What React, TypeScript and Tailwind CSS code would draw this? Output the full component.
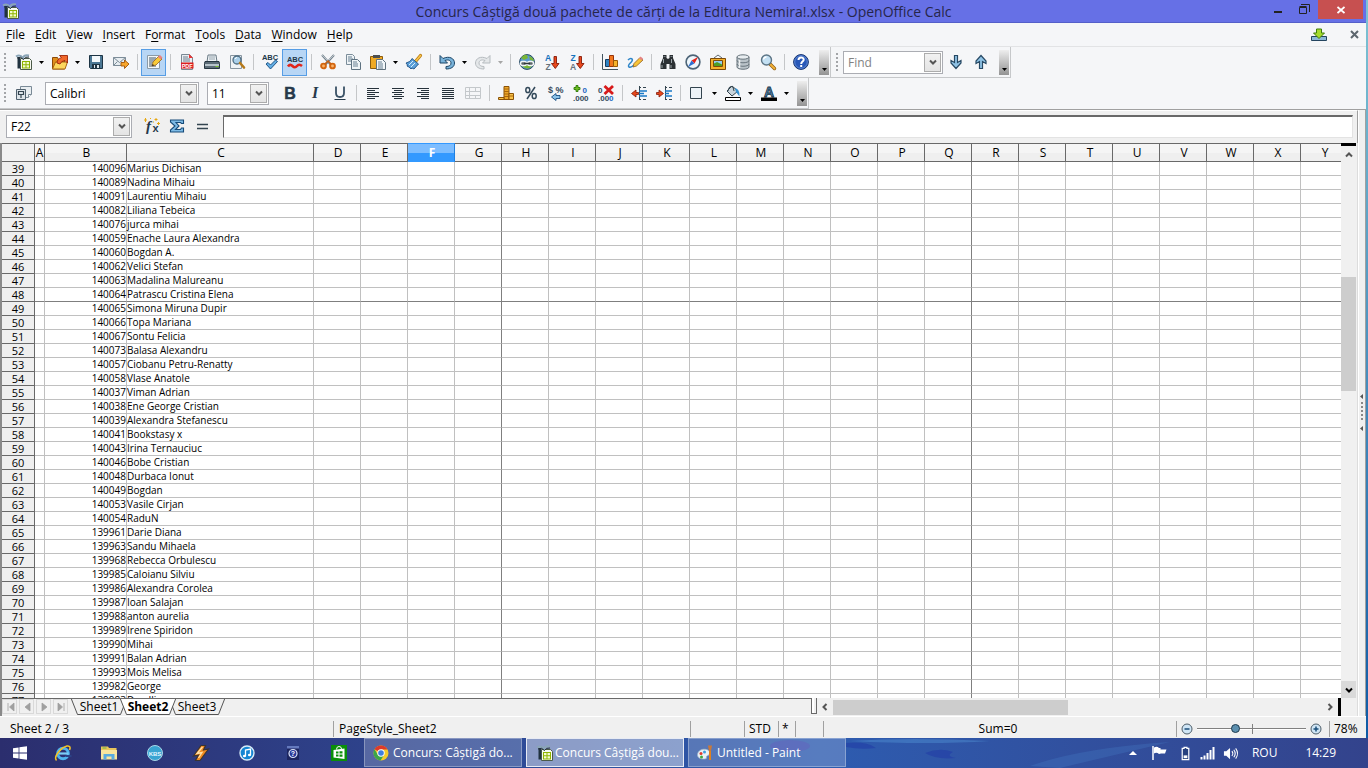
import React from 'react';

type IconProps = { name: string; size?: number };

const sheetIcon = (
  <>
    <path d="M1.500 3h2.500v11.500H1.500z" fill="#20323f" />
    <path d="M4.500 4.500h9l2 2v9h-11z" fill="#f7f9f2" stroke="#4b5a48" />
    <path d="M6 7h8v7.500H6z" fill="#8fb400" />
    <path d="M7 8h2.500v2.200H7zM10.500 8H13v2.200h-2.500zM7 11.200h2.500v2.300H7zM10.500 11.200H13v2.300h-2.500z" fill="#f4fbd0" />
    <path d="M0 2.500q4-2.500 7 1.500 1-3.500 6-2.500" fill="none" stroke="#8aa5b7" strokeWidth="2" />
    <path d="M1 4q4-2 6.500 1.500Q9 2.500 13 3" fill="none" stroke="#25313b" strokeWidth="1" />
  </>
);

const art: Record<string, React.ReactNode> = {
  sheet: sheetIcon,
  open: (
    <>
      <path d="M.5 3.500h5l1 2h6v9.500H.5z" fill="#e08e1c" stroke="#8c4a08" />
      <path d="M.5 15l3-7h12l-2.500 7z" fill="#fcd65c" stroke="#a8640f" />
      <path d="M5 9q0-4 4.500-5.500L7.500 1.500h8v7.500l-2.500-2.500Q9 7 8 10z" fill="#f0682a" stroke="#9a2508" strokeWidth=".9" />
    </>
  ),
  save: (
    <>
      <path d="M1.500 1.500h13v13h-12l-1-1z" fill="#4b7794" stroke="#1d3444" />
      <path d="M4 2h8v6H4z" fill="#f3f8fb" />
      <path d="M4 10h8v4.500H4z" fill="#1f3443" />
      <path d="M6 11h5v3H6z" fill="#dfe9ef" />
      <path d="M7 11h2v3H7z" fill="#1f3443" />
    </>
  ),
  mail: (
    <>
      <path d="M.5 3.500h12v8H.5z" fill="#e7edf1" stroke="#7d8d99" />
      <path d="M.5 3.500l6 5 6-5M.5 11.500l4-4M12.500 11.500l-4-4" fill="none" stroke="#7d8d99" />
      <path d="M8 8.500h3.500v-2.500l4.500 4-4.500 4.500v-2.500H8z" fill="#f7a62c" stroke="#a35408" strokeWidth=".9" />
    </>
  ),
  edit: (
    <>
      <path d="M1.500 1.500h12v13h-12z" fill="#f4f7f9" stroke="#8b9aa6" />
      <path d="M3 4h7M3 6h6M3 8h4M3 10h3M3 12h7" stroke="#3f5464" />
      <path d="M6 12l1-4 6-6 3 3-6 6z" fill="#f8ca38" stroke="#97621a" strokeWidth=".8" />
      <path d="M12 3l2-2 2.500 2.500L14.500 5.500z" fill="#e88383" />
      <path d="M6 12l.7-2 1.500 1.300z" fill="#222" />
    </>
  ),
  pdf: (
    <>
      <path d="M2.500.5h8l3 3v12h-11z" fill="#e9eef2" stroke="#798893" />
      <path d="M4 3h5M4 5h7M4 7h7" stroke="#6d7f8d" />
      <path d="M10 0l4 4h-4z" fill="#e33" />
      <path d="M2 8.500h12.500V14.500H2z" fill="#dc1f1f" />
      <text x="8.200" y="13.500" fontSize="5.500" fontWeight="800" textAnchor="middle" fill="#fff" fontFamily="Liberation Sans">PDF</text>
    </>
  ),
  print: (
    <>
      <path d="M4 1h8l1 7H3z" fill="#edf2f5" stroke="#6b7b86" />
      <path d="M5 3h6M5 5h6" stroke="#98a6b0" />
      <path d="M1 7.500h14l.5 2v5H.5v-5z" fill="#5c6c77" stroke="#263641" />
      <path d="M1 10h14v2H1z" fill="#b7c4cb" />
      <path d="M11.500 12h3v1h-3z" fill="#79c626" />
    </>
  ),
  preview: (
    <>
      <path d="M1.500 1.500h11v13h-11z" fill="#eef2f5" stroke="#8795a0" />
      <circle cx="8" cy="6" r="4" fill="#a9cfe9" stroke="#4d6b80" strokeWidth="1.300" />
      <path d="M11 9l4 4.500" stroke="#b67a1b" strokeWidth="2.600" strokeLinecap="round" />
      <path d="M6 5a2.500 2.500 0 012-1.500" stroke="#fff" fill="none" />
    </>
  ),
  spell: (
    <>
      <text x="8" y="6" fontSize="7.500" fontWeight="700" textAnchor="middle" fill="#23384a" fontFamily="Liberation Sans">ABC</text>
      <path d="M4 10l2-1.500 2.500 2.500 5-5 2 1.500-7 7.500z" fill="#63aee4" stroke="#134a7d" strokeWidth=".9" />
    </>
  ),
  autospell: (
    <>
      <text x="8" y="8" fontSize="7.500" fontWeight="700" textAnchor="middle" fill="#23384a" fontFamily="Liberation Sans">ABC</text>
      <path d="M1 12.500q2-3 4.500-.5t4.500 0 5 0" fill="none" stroke="#e0251b" strokeWidth="2.600" />
    </>
  ),
  cut: (
    <>
      <path d="M2 1l9 10M14 1L5 11" stroke="#76848e" strokeWidth="2" />
      <path d="M2 1l6 6M14 1L9 6" stroke="#d8e0e5" strokeWidth=".7" />
      <circle cx="3.500" cy="12" r="2.400" fill="#f8b26a" stroke="#d3650e" strokeWidth="1.900" />
      <circle cx="12.500" cy="12" r="2.400" fill="#f8b26a" stroke="#d3650e" strokeWidth="1.900" />
      <path d="M5 10l3-3 3 3" fill="none" stroke="#c95f10" strokeWidth="1.500" />
    </>
  ),
  copy: (
    <>
      <path d="M1.500.5h6l2 2v8h-8z" fill="#eef3f6" stroke="#7b8d9a" />
      <path d="M3 3h4M3 5h5M3 7h5" stroke="#688092" />
      <path d="M6.500 5.500h6l3 3v7h-9z" fill="#eef3f6" stroke="#5e7281" />
      <path d="M8 8h4M8 10h5M8 12h5" stroke="#688092" />
    </>
  ),
  paste: (
    <>
      <path d="M.5 2.500h12v12H.5z" fill="#f0aa24" stroke="#8c5c0c" />
      <path d="M3 1h7v3H3z" fill="#4c4f50" />
      <path d="M6.500 5.500h6l3 3v7h-9z" fill="#f3f7f9" stroke="#60717d" />
      <path d="M8 8h4M8 10h5M8 12h5M8 14h5" stroke="#688092" />
    </>
  ),
  brush: (
    <>
      <path d="M14.500 1.500l-5 6" stroke="#bb7c14" strokeWidth="3.200" strokeLinecap="round" />
      <path d="M14.500 1.500l-5 6" stroke="#f8c64b" strokeWidth="1.600" strokeLinecap="round" />
      <path d="M6 4.500l6.500 5.500-4.500 5-2-1-1 1-2-2-2-1 .5-1-1.500-2c3-1 5-2 6-4.500z" fill="#5b9fd8" stroke="#1d5186" strokeWidth=".9" />
      <path d="M3 11l4-4M5 13l4-4" stroke="#d8edfb" />
    </>
  ),
  undo: (
    <path d="M1 1.500v7.500h7.500L6 6.500c4-1.500 6 .5 6 2.500 0 2.500-2 3.500-5 3.500v2.500c5 0 8.500-2 8.500-6 0-4.500-5-7.500-11.500-4.500z" fill="#79b3da" stroke="#1c4566" strokeWidth="1" />
  ),
  redo: (
    <path d="M15 1.500v7.500H7.500L10 6.500c-4-1.500-6 .5-6 2.500 0 2.500 2 3.500 5 3.500v2.500c-5 0-8.500-2-8.500-6 0-4.500 5-7.500 11.500-4.500z" fill="#e4e7e9" stroke="#b6bbbf" strokeWidth="1" />
  ),
  globe: (
    <>
      <circle cx="8" cy="8" r="7.400" fill="#5b9bd0" stroke="#25475f" />
      <path d="M2 4q3-4 6-3l1 3-4 2zM10 2q4 1 5 5l-4-1zM3 12q5-2 10 0-4 5-10 0z" fill="#79b636" />
      <rect x="1.500" y="7.500" width="6" height="4" rx="2" fill="#5a6468" stroke="#f2f5f7" strokeWidth="1.500" />
      <rect x="8.500" y="7.500" width="6" height="4" rx="2" fill="#5a6468" stroke="#f2f5f7" strokeWidth="1.500" />
      <path d="M5 9.500h6" stroke="#30373b" strokeWidth="1.500" />
    </>
  ),
  sortAz: (
    <>
      <text x="4" y="7" fontSize="8.500" fontWeight="700" textAnchor="middle" fill="#1372bd" fontFamily="Liberation Sans">A</text>
      <text x="4" y="15.500" fontSize="8.500" fontWeight="700" textAnchor="middle" fill="#65727c" fontFamily="Liberation Sans">Z</text>
      <path d="M10 2.500h2.500v7h2.500l-3.700 5-3.800-5H10z" fill="#e8481c" stroke="#851a08" strokeWidth=".9" />
    </>
  ),
  sortZa: (
    <>
      <text x="4" y="7" fontSize="8.500" fontWeight="700" textAnchor="middle" fill="#1372bd" fontFamily="Liberation Sans">Z</text>
      <text x="4" y="15.500" fontSize="8.500" fontWeight="700" textAnchor="middle" fill="#65727c" fontFamily="Liberation Sans">A</text>
      <path d="M10 2.500h2.500v7h2.500l-3.700 5-3.800-5H10z" fill="#e8481c" stroke="#851a08" strokeWidth=".9" />
    </>
  ),
  chart: (
    <>
      <path d="M.5 0v15.500H16" fill="none" stroke="#42545f" />
      <path d="M3.500 5.500h4v7h-4z" fill="#2e83c4" stroke="#143d62" />
      <path d="M7.500 1.500h4v11h-4z" fill="#f2771d" stroke="#96330a" />
      <path d="M11.500 6.500h4v6h-4z" fill="#f7b52c" stroke="#9a5b0a" />
    </>
  ),
  draw: (
    <>
      <path d="M1 6c3-3 5-1 4 1s-5 4-3 6c2 1 4-1 5-2" fill="none" stroke="#2f86c9" strokeWidth="1.600" />
      <path d="M6 13l1-3.500 6-6 3 2.500-6.500 6z" fill="#f8c437" stroke="#92601a" strokeWidth=".8" />
      <path d="M12 4.500l1.500-2L16 4.500 15 6.500z" fill="#e58585" />
    </>
  ),
  find: (
    <>
      <path d="M3 1h3.500v3L8 5l1.500-1V1H13v3l2.500 6v5H9.500v-5h-3v5H.5v-5L3 4z" fill="#2b3033" />
      <path d="M3.500 5v4M11.500 5v4M2 11v3M11 11v3" stroke="#9aa3a8" />
      <path d="M3.500 2.500h2M10.500 2.500h2" stroke="#788187" />
    </>
  ),
  navigator: (
    <>
      <circle cx="8" cy="8" r="6.900" fill="#eef6fc" stroke="#4d6477" strokeWidth="1.600" />
      <path d="M13 3L9.500 9.500l-3-3z" fill="#e5231b" />
      <path d="M3 13l3.500-6.500 3 3z" fill="#2f6fd0" />
    </>
  ),
  gallery: (
    <>
      <path d="M8 1L4 4M8 1l4 3" stroke="#626a6d" />
      <path d="M.5 4.500h15v11H.5z" fill="#f5b12c" stroke="#7c4a08" />
      <path d="M3.500 6.500h9v6h-9z" fill="#91ccf1" stroke="#7c4a08" />
      <path d="M4 12V9.500l3-1.500 5 2.500V12z" fill="#4f9d24" />
    </>
  ),
  db: (
    <>
      <path d="M2 3v10c0 3 12 3 12 0V3z" fill="#b9c2c8" stroke="#69757d" />
      <ellipse cx="8" cy="3" rx="6" ry="2.200" fill="#e8edf0" stroke="#69757d" />
      <path d="M2 6.500c0 3 12 3 12 0M2 10c0 3 12 3 12 0" fill="none" stroke="#69757d" />
      <path d="M4.500 6v8" stroke="#eef1f3" strokeWidth="1.500" />
    </>
  ),
  zoom: (
    <>
      <path d="M10 10l4.500 4.500" stroke="#925f12" strokeWidth="3.400" strokeLinecap="round" />
      <path d="M10.500 10.500l4 4" stroke="#f3b238" strokeWidth="1.800" strokeLinecap="round" />
      <circle cx="6.500" cy="6" r="5" fill="#c3e0f3" stroke="#5c7485" strokeWidth="1.400" />
      <path d="M3.500 5.500a3 3 0 013-2.500" stroke="#fff" strokeWidth="1.300" fill="none" />
    </>
  ),
  help: (
    <>
      <circle cx="8" cy="8" r="7.400" fill="#2858b8" stroke="#17356f" />
      <circle cx="8" cy="8" r="6.300" fill="none" stroke="#7399df" strokeWidth=".7" />
      <path d="M5.500 6c0-3.300 5.200-3.300 5.200-.3C10.700 7.600 8.200 7.700 8.200 10" fill="none" stroke="#fff" strokeWidth="2" />
      <path d="M7.200 11h2v2h-2z" fill="#fff" />
    </>
  ),
  arrowDown: (
    <path d="M6.500 1.500h3v7l3.500-2v2.500L8 14.500 3 9V6.500l3.500 2z" fill="#8fc3e6" stroke="#274964" strokeWidth="1.200" />
  ),
  arrowUp: (
    <path d="M6.500 14.500h3v-7l3.500 2V7L8 1.500 3 7v2.500l3.500-2z" fill="#8fc3e6" stroke="#274964" strokeWidth="1.200" />
  ),
  styles: (
    <>
      <path d="M4.500 1.500h11v8l-3 3h-8z" fill="#e9eef1" stroke="#7a8a96" />
      <path d="M15.500 9.500h-3v3" fill="#fff" stroke="#7a8a96" />
      <path d="M.5 4.500h9v10h-9z" fill="#dde4e9" stroke="#50616e" />
      <path d="M2.500 6.500h5v3h-5zM5 9.500V13" fill="none" stroke="#33444f" strokeWidth="1.200" />
    </>
  ),
  bold: <text x="8" y="13.500" fontSize="16" fontWeight="800" textAnchor="middle" fill="#26394a" stroke="#26394a" strokeWidth=".5" fontFamily="Liberation Sans">B</text>,
  italic: <text x="8" y="13" fontSize="16" fontStyle="italic" fontWeight="700" textAnchor="middle" fill="#26394a" fontFamily="Liberation Serif">I</text>,
  underline: (
    <>
      <path d="M4 1.500v6.500q0 4 4 4t4-4V1.500" fill="none" stroke="#3b5266" strokeWidth="1.800" />
      <path d="M2.500 14.500h11" stroke="#26394a" />
    </>
  ),
  left: <path d="M2 3.500h12M2 5.500h8M2 7.500h12M2 9.500h8M2 11.500h12M2 13.500h8" stroke="#26323b" />,
  center: <path d="M2 3.500h12M4 5.500h8M2 7.500h12M4 9.500h8M2 11.500h12M4 13.500h8" stroke="#26323b" />,
  right: <path d="M2 3.500h12M6 5.500h8M2 7.500h12M6 9.500h8M2 11.500h12M6 13.500h8" stroke="#26323b" />,
  justify: <path d="M2 3.500h12M2 5.500h12M2 7.500h12M2 9.500h12M2 11.500h12M2 13.500h12" stroke="#26323b" />,
  merge: <path d="M.5 2.500h15v11H.5zM.5 6.500h15M.5 10.500h15M4.500 2.500v11M10.500 2.500v4M10.500 10.500v3" fill="none" stroke="#c4c8cb" />,
  coin: (
    <>
      <path d="M6 1.500h5v13H6z" fill="#eda72a" stroke="#8a5207" />
      <path d="M6 4h5M6 6.500h5M6 9h5M6 11.500h5" stroke="#a8660d" />
      <path d="M11 8.500h4.500v6H11zM.5 12.500H6v2H.5z" fill="#f8c34b" stroke="#8a5207" />
      <path d="M11 11h4.500" stroke="#a8660d" />
    </>
  ),
  percent: (
    <>
      <path d="M12 2L4 14" stroke="#33495a" strokeWidth="1.500" />
      <ellipse cx="4.800" cy="5" rx="2" ry="2.600" fill="none" stroke="#33495a" strokeWidth="1.500" />
      <ellipse cx="11.200" cy="11" rx="2" ry="2.600" fill="none" stroke="#33495a" strokeWidth="1.500" />
    </>
  ),
  standard: (
    <>
      <text x="0" y="7.500" fontSize="9" fontWeight="700" fill="#33495a" fontFamily="Liberation Sans">$</text>
      <text x="7.500" y="7.500" fontSize="9" fontWeight="700" fill="#33495a" fontFamily="Liberation Sans">%</text>
      <path d="M12 10.500H8V8.500L3.500 12 8 15.500v-2h4z" fill="#8cc3ea" stroke="#174f82" strokeWidth=".9" />
    </>
  ),
  addDec: (
    <>
      <path d="M3 .5h2v2h2v2H5v2H3v-2H1v-2h2z" fill="#71c024" stroke="#2f7a08" strokeWidth=".9" />
      <text x="9.500" y="8" fontSize="8" fontWeight="700" fill="#2366c2" fontFamily="Liberation Sans">0</text>
      <text x="0" y="15.500" fontSize="8" fontWeight="700" fill="#33495a" fontFamily="Liberation Sans">.000</text>
    </>
  ),
  delDec: (
    <>
      <text x="0" y="8" fontSize="8" fontWeight="700" fill="#33495a" fontFamily="Liberation Sans">0</text>
      <text x="0" y="15.500" fontSize="8" fontWeight="700" fill="#33495a" fontFamily="Liberation Sans">.00</text>
      <text x="11" y="15.500" fontSize="8" fontWeight="700" fill="#2366c2" fontFamily="Liberation Sans">0</text>
      <path d="M6.500 1l8.500 8M15 1L6.500 9" stroke="#d71a1a" strokeWidth="2.800" />
    </>
  ),
  outdent: (
    <>
      <path d="M8 2.500h2M12 2.500h3M8 14.500h2M12 14.500h3M8.500 1v14" stroke="#33444f" />
      <path d="M8 6h8M8 8.500h5M8 11h8" stroke="#1a7ac6" strokeWidth="1.600" />
      <path d="M7.500 7.500H5V5L.5 8.500 5 12V9.500h2.500z" fill="#e8481c" stroke="#851a08" strokeWidth=".8" />
    </>
  ),
  indent: (
    <>
      <path d="M9 2.500h2M13 2.500h3M9 14.500h2M13 14.500h3M9.500 1v14" stroke="#33444f" />
      <path d="M9 6h7M9 8.500h4M9 11h7" stroke="#1a7ac6" strokeWidth="1.600" />
      <path d="M.5 7.500H3V5l4.500 3.500L3 12V9.500H.5z" fill="#e8481c" stroke="#851a08" strokeWidth=".8" />
    </>
  ),
  borders: <path d="M1.500 2.500h11v11h-11z" fill="#edf3f8" stroke="#33444f" />,
  fill: (
    <>
      <path d="M2 6l5-5 6 5-6 5z" fill="#c9d4db" stroke="#33444f" />
      <path d="M3 6q1-6 5-4l1 4" fill="none" stroke="#33444f" />
      <path d="M10 3q5 1 4.500 8.500L11 7z" fill="#3490cf" />
      <path d="M.5 12.500h15v3H.5z" fill="#fff" stroke="#000" />
    </>
  ),
  fontColor: (
    <>
      <text x="8" y="11.500" fontSize="14" fontWeight="700" textAnchor="middle" fill="#4c86b0" stroke="#1c3346" strokeWidth=".8" fontFamily="Liberation Sans">A</text>
      <path d="M0 12.500h16V16H0z" fill="#000" />
    </>
  ),
  fx: (
    <>
      <text x="2" y="13" fontSize="15" fontStyle="italic" fontWeight="700" fill="#26394a" fontFamily="Liberation Serif">f</text>
      <text x="8.500" y="14" fontSize="11" fontWeight="700" fill="#26394a" fontFamily="Liberation Sans">x</text>
      <path d="M1.500 0v4M0 2h3M12 0v3M10.500 1.500h3M14.500 4v3M13 5.500h3M6 .5h1M9 4h1" stroke="#e8a811" />
    </>
  ),
  sigma: (
    <path d="M1.500 2h13v3.500h-2L11.500 4.500H7L10 8l-3.500 3.500h5l1-1.500h2v4h-13v-2L6 8 1.500 4z" fill="#7dbbe6" stroke="#164a78" strokeWidth="1.100" />
  ),
  equals: <path d="M3 6.500h11M3 10.500h11" stroke="#33444f" strokeWidth="1.400" />,
  update: (
    <>
      <path d="M.5 9.500h15v4H.5z" fill="#8cb8d9" stroke="#23445f" />
      <path d="M5.500 2h5v4h3l-5.500 5.500L2.500 6h3z" fill="#a6dc2c" stroke="#3f7d0a" />
    </>
  ),
  windows: <path d="M1 3.200l5.600-.8v5.200H1zM7.400 2.300L15 1.200v6.400H7.400zM1 8.400h5.600v5.200L1 12.800zM7.400 8.400H15v6.400l-7.600-1.100z" fill="#fff" />,
  ie: (
    <>
      <circle cx="8" cy="8.500" r="5.300" fill="none" stroke="#4fb4ee" strokeWidth="3" />
      <path d="M4 8.500h9.500" stroke="#7ccdf7" strokeWidth="2.200" />
      <path d="M10.500 10h6v2h-6z" fill="#2b4286" />
      <path d="M1.500 15.500C-2 12 6 2.500 12 1c3.500-.5 3.500 2 2.500 4" fill="none" stroke="#f5c325" strokeWidth="1.600" />
    </>
  ),
  folder: (
    <>
      <path d="M0 1.500h7l1 1.500h7.500V14H0z" fill="#e9c65b" />
      <path d="M0 5h16v9.500H0z" fill="#f8e59e" />
      <path d="M2.500 14.500V9h11v5.500h-3V11.500h-5v3z" fill="#58abe0" />
      <path d="M1.500 3h4" stroke="#68b447" />
    </>
  ),
  kbs: (
    <>
      <circle cx="8" cy="8" r="7.500" fill="#39a4d2" stroke="#a9d7e8" />
      <text x="8" y="10.500" fontSize="6" fontWeight="700" textAnchor="middle" fill="#e5f6ff" fontFamily="Liberation Sans">KBS</text>
    </>
  ),
  winamp: (
    <>
      <path d="M8 .5h4.500L10.500 5 15.500 4 7 15.500H2.500L5.500 10 .5 11z" fill="#f28b20" stroke="#3a3431" strokeWidth="1.200" />
      <path d="M9.500 2L4 8.500 9 7.500 5.500 13" fill="none" stroke="#ffe2a8" strokeWidth="1.300" />
    </>
  ),
  itunes: (
    <>
      <circle cx="8" cy="8" r="7" fill="#1385d3" stroke="#d9ecf8" strokeWidth="1.400" />
      <path d="M6.500 11V5l5-1v6" fill="none" stroke="#fff" strokeWidth="1.300" />
      <ellipse cx="5.500" cy="11" rx="1.600" ry="1.300" fill="#fff" />
      <ellipse cx="10.500" cy="10" rx="1.600" ry="1.300" fill="#fff" />
    </>
  ),
  book: (
    <>
      <path d="M2 1h12v14H2z" fill="#1c2560" />
      <path d="M2 1h12v2.500H2z" fill="#6479bd" />
      <circle cx="8" cy="8.500" r="4" fill="#27389a" stroke="#dbe3f7" strokeWidth="1.200" />
      <text x="8" y="11" fontSize="7" fontWeight="700" textAnchor="middle" fill="#fff" fontFamily="Liberation Sans">?</text>
    </>
  ),
  store: (
    <>
      <path d="M0 0h16v16H0z" fill="#0a8f0a" />
      <path d="M2.500 5l11-1.500v10.500l-11-1.500z" fill="#fff" />
      <path d="M5.500 4.500q0-3 2.500-3t2.500 2.500" fill="none" stroke="#fff" />
      <path d="M5 6.500h2.500v2H5zM8.500 6.300h3v2.200h-3zM5 9.500h2.500v2H5zM8.500 9.500h3v2.300h-3z" fill="#0a8f0a" />
    </>
  ),
  chrome: (
    <>
      <circle cx="8" cy="8" r="7.500" fill="#f5cb2c" />
      <path d="M8 8L1.500 4.200A7.500 7.500 0 0114.500 4.500H8z" fill="#dc3a2c" />
      <path d="M1.500 4.200A7.500 7.500 0 007.500 15.500L11 10 5 10z" fill="#3ba648" />
      <circle cx="8" cy="8" r="3.700" fill="#fff" />
      <circle cx="8" cy="8" r="2.800" fill="#3f7fe0" />
    </>
  ),
  paint: (
    <>
      <path d="M.5 10C.5 5 6 3.500 9.500 4.500c4 1 4 5 1.500 6-1.500.5-2 1-1.500 2.500S.5 15 .5 10z" fill="#e9f1f7" stroke="#9db3c6" strokeWidth=".7" />
      <circle cx="4" cy="8.500" r="1.500" fill="#df3a2e" />
      <circle cx="7.500" cy="6.900" r="1.500" fill="#3f9de0" />
      <circle cx="4.500" cy="12" r="1.500" fill="#43a83c" />
      <path d="M13 6v9" stroke="#e2811d" strokeWidth="2" />
      <path d="M11 .5h4l-1 5.500h-2z" fill="#c9793a" />
    </>
  ),
  trayFlag: (
    <>
      <path d="M2 1v14" stroke="#fff" strokeWidth="1.500" />
      <path d="M3 2.500q3-1.500 5 .5h1.500v1.500h6L14 8.500h-4L8 9Q5.500 7 3 8.500z" fill="#fff" />
    </>
  ),
  trayBattery: (
    <>
      <path d="M4.500 2.500h2v-1h3v1h2v12h-7z" fill="#27417f" stroke="#fff" strokeWidth="1.300" />
      <path d="M6 10h4v3H6z" fill="#fff" />
    </>
  ),
  traySignal: <path d="M.5 12h2v2.500h-2zM3.500 10.500h2v4h-2zM6.500 8h2v6.500h-2zM9.500 5h2v9.500h-2zM12.500 2h2v12.500h-2z" fill="#fff" />,
  trayVolume: (
    <>
      <path d="M1 5.500h2.500L7.500 2v12l-4-3.500H1z" fill="#fff" />
      <path d="M9.500 5.500q2 2.500 0 5M11.500 4q3 4 0 8M13.500 2.500q4 5.500 0 11" fill="none" stroke="#fff" strokeWidth="1.100" />
    </>
  ),
};

function Icon({ name, size = 16 }: IconProps) {
  return (
    <svg viewBox="0 0 16 16" width={size} height={size} aria-hidden="true" className="block shrink-0 overflow-visible">
      {art[name]}
    </svg>
  );
}

function ToolButton({ name, active }: { name: string; active?: boolean }) {
  return (
    <button
      type="button"
      aria-label={name}
      className={
        active
          ? 'flex h-[27px] w-[25px] shrink-0 items-center justify-center border border-[#569de5] bg-[#b8d6f5]'
          : 'flex h-[27px] w-[25px] shrink-0 items-center justify-center'
      }
    >
      <Icon name={name} />
    </button>
  );
}

function DropArrow({ muted }: { muted?: boolean }) {
  return (
    <button type="button" aria-label="More options" className="flex h-[27px] w-[11px] shrink-0 items-center justify-center">
      <svg width="5" height="3" viewBox="0 0 5 3" aria-hidden="true">
        <path d="M0 0h5L2.500 3z" fill={muted ? '#a6a6a6' : '#000'} />
      </svg>
    </button>
  );
}

function Sep() {
  return (
    <span className="flex w-2 shrink-0 justify-center">
      <span className="h-4 w-px bg-[#c4c6c8]" />
    </span>
  );
}

function Tools({ items }: { items: string[] }) {
  return (
    <>
      {items.map((item, i) => {
        if (item === '|') return <Sep key={i} />;
        if (item === 'v') return <DropArrow key={i} />;
        if (item === 'x') return <DropArrow key={i} muted />;
        if (item.startsWith('*')) return <ToolButton key={i} name={item.slice(1)} active />;
        return <ToolButton key={i} name={item} />;
      })}
    </>
  );
}

function Grip() {
  return (
    <span className="flex w-[11px] shrink-0 justify-start pl-1">
      <span className="h-[18px] w-0 border-l-2 border-dotted border-[#a3a5a8]" />
    </span>
  );
}

function Overflow() {
  return (
    <button type="button" aria-label="Toolbar options" className="flex h-[25px] w-[10px] shrink-0 items-end justify-center bg-linear-to-b from-[#eeeeee] to-[#949494] pb-1">
      <svg width="5" height="3" viewBox="0 0 5 3" aria-hidden="true">
        <path d="M0 0h5L2.500 3z" fill="#000" />
      </svg>
    </button>
  );
}

function Combo({ label, value, placeholder, className }: { label: string; value?: string; placeholder?: string; className: string }) {
  return (
    <div className={'flex h-[23px] shrink-0 items-center border border-[#abadb3] bg-white p-px ' + className}>
      <input
        aria-label={label}
        defaultValue={value}
        placeholder={placeholder}
        className="h-full min-w-0 flex-1 bg-white pl-[3px] text-[12px] outline-none placeholder:text-[#828282]"
      />
      <button type="button" aria-label={label + ' list'} className="flex h-[19px] w-[17px] shrink-0 items-center justify-center border border-[#acacac] bg-linear-to-b from-[#f1f1f1] to-[#e4e4e4]">
        <Chevron dir="down" />
      </button>
    </div>
  );
}

const chevrons = {
  down: 'M1 2.500l3 3 3-3',
  up: 'M1 5.500l3-3 3 3',
  left: 'M5.500 1l-3 3 3 3',
  right: 'M2.500 1l3 3-3 3',
};

function Chevron({ dir, dark }: { dir: keyof typeof chevrons; dark?: boolean }) {
  return (
    <svg width="8" height="8" viewBox="0 0 8 8" aria-hidden="true" className="block">
      <path d={chevrons[dir]} fill="none" stroke={dark ? '#000' : '#555'} strokeWidth="2" />
    </svg>
  );
}

const menus = ['File', 'Edit', 'View', 'Insert', 'Format', 'Tools', 'Data', 'Window', 'Help'];
const mnemonic: Record<string, number> = { Format: 1 };

const columns = 'ABCDEFGHIJKLMNOPQRSTUVWXY'.split('');

const rows: [number, string][] = [
  [140096, 'Marius Dichisan'],
  [140089, 'Nadina Mihaiu'],
  [140091, 'Laurentiu Mihaiu'],
  [140082, 'Liliana Tebeica'],
  [140076, 'jurca mihai'],
  [140059, 'Enache Laura Alexandra'],
  [140060, 'Bogdan A.'],
  [140062, 'Velici Stefan'],
  [140063, 'Madalina Malureanu'],
  [140064, 'Patrascu Cristina Elena'],
  [140065, 'Simona Miruna Dupir'],
  [140066, 'Topa Mariana'],
  [140067, 'Sontu Felicia'],
  [140073, 'Balasa Alexandru'],
  [140057, 'Ciobanu Petru-Renatty'],
  [140058, 'Vlase Anatole'],
  [140037, 'Viman Adrian'],
  [140038, 'Ene George Cristian'],
  [140039, 'Alexandra Stefanescu'],
  [140041, 'Bookstasy x'],
  [140043, 'Irina Ternauciuc'],
  [140046, 'Bobe Cristian'],
  [140048, 'Durbaca Ionut'],
  [140049, 'Bogdan'],
  [140053, 'Vasile Cirjan'],
  [140054, 'RaduN'],
  [139961, 'Darie Diana'],
  [139963, 'Sandu Mihaela'],
  [139968, 'Rebecca Orbulescu'],
  [139985, 'Caloianu Silviu'],
  [139986, 'Alexandra Corolea'],
  [139987, 'Ioan Salajan'],
  [139988, 'anton aurelia'],
  [139989, 'Irene Spiridon'],
  [139990, 'Mihai'],
  [139991, 'Balan Adrian'],
  [139993, 'Mois Melisa'],
  [139982, 'George'],
  [139983, 'Dan Ilie'],
];

function Sheet() {
  return (
    <div className="relative min-h-0 min-w-0 flex-1 overflow-hidden bg-white">
      <table className="absolute inset-x-0 top-0 w-full table-fixed border-separate border-spacing-0">
        <colgroup>
          <col className="w-[33px]" />
          {columns.map((c) => (
            <col key={c} className={c === 'A' ? 'w-[10px]' : c === 'B' ? 'w-[82px]' : c === 'C' ? 'w-[187px]' : c === 'Y' ? '' : 'w-[47px]'} />
          ))}
        </colgroup>
        <thead>
          <tr className="h-[19px]">
            <th className="border-y border-r border-[#696969] bg-[#f2f2f2] p-0" />
            {columns.map((c) => (
              <th
                key={c}
                scope="col"
                className={
                  c === 'F'
                    ? 'border-y border-r border-y-[#3399ff] border-r-[#1f7fe0] bg-linear-to-b from-[#7dbdff] from-50% to-[#3399ff] to-50% p-0 pl-[2px] text-[12px] leading-[17px] font-bold text-white'
                    : c === 'Y'
                      ? 'border-y border-[#696969] bg-linear-to-b from-[#f5f5f5] from-50% to-[#efefef] to-50% p-0 pl-2 text-[12px] leading-[17px] font-normal'
                      : c === 'A'
                        ? 'border-y border-r border-[#696969] bg-linear-to-b from-[#f5f5f5] from-50% to-[#efefef] to-50% p-0 text-[12px] leading-[17px] font-normal'
                        : 'border-y border-r border-[#696969] bg-linear-to-b from-[#f5f5f5] from-50% to-[#efefef] to-50% p-0 pl-[2px] text-[12px] leading-[17px] font-normal'
                }
              >
                {c}
              </th>
            ))}
          </tr>
        </thead>
        <tbody>
          {rows.map(([id, name], r) => {
            const line = r === 9 ? ' border-b-[#7f7f7f]' : ' border-b-[#c0c0c0]';
            return (
              <tr key={id} className="h-[14px]">
                <th scope="row" className="border-r border-b border-[#696969] bg-[#efefef] p-0 text-[11px] leading-[13px] font-normal">
                  {39 + r}
                </th>
                {columns.map((c) => (
                  <td
                    key={c}
                    className={
                      (c === 'G' || c === 'Q' ? 'border-r-[#7f7f7f]' : 'border-r-[#c0c0c0]') +
                      line +
                      (c === 'Y' ? '' : ' border-r') +
                      ' border-b p-0 text-[10px] leading-[13px] whitespace-nowrap' +
                      (c === 'B' ? ' text-right' : '')
                    }
                  >
                    {c === 'B' ? id : c === 'C' ? name : null}
                  </td>
                ))}
              </tr>
            );
          })}
        </tbody>
      </table>
    </div>
  );
}

function VerticalScroll() {
  return (
    <div className="flex w-[17px] shrink-0 flex-col border-r border-[#dcdcdc] bg-[#f0f0f0] pr-px">
      <div className="h-[3px] w-full shrink-0 bg-black" />
      <button type="button" aria-label="Scroll up" className="flex h-[17px] w-full shrink-0 items-center justify-center">
        <Chevron dir="up" />
      </button>
      <div className="flex min-h-0 flex-1 flex-col">
        <div className="basis-[22%]" />
        <div className="basis-[22%] bg-[#cdcdcd]" />
      </div>
      <button type="button" aria-label="Scroll down" className="flex h-[17px] w-full shrink-0 items-center justify-center bg-[#dadada]">
        <Chevron dir="down" dark />
      </button>
    </div>
  );
}

const navPaths = ['M3 1v8M9 1v8L4.500 5z', 'M8 1v8L3 5z', 'M3 1v8l5-4z', 'M8 1v8M2 1v8l4.500-4z'];

function SheetTabs() {
  return (
    <div className="flex h-[18px] shrink-0 bg-[#f0f0f0]">
      <div className="flex min-w-0 flex-[809_1_0] border-t border-[#696969]">
        <div className="flex shrink-0 gap-[2px]">
          {navPaths.map((d, i) => (
            <button key={d} type="button" aria-label={['First', 'Previous', 'Next', 'Last'][i] + ' sheet'} className="flex h-[15px] w-[15px] items-center justify-center border border-[#d9d9d9]">
              <svg width="10" height="10" viewBox="0 0 10 10" aria-hidden="true">
                <path d={d} fill="#a0a0a0" stroke="#a0a0a0" strokeWidth=".8" />
              </svg>
            </button>
          ))}
        </div>
        <div className="flex pl-[3px]">
          {['Sheet1', 'Sheet2', 'Sheet3'].map((s) => {
            const active = s === 'Sheet2';
            return (
              <button
                key={s}
                type="button"
                className={
                  active
                    ? 'relative z-10 -ml-[7px] h-4 w-14 text-[12px] leading-4 font-bold first:ml-0'
                    : 'relative -ml-[7px] h-4 w-14 text-[12px] leading-4 first:ml-0'
                }
              >
                <svg viewBox="0 0 56 16" className="absolute inset-0 h-full w-full" aria-hidden="true">
                  <path d="M0 -1L6.500 15.500H49.500L56 -1" fill={active ? '#fff' : '#f0f0f0'} stroke="#555" />
                </svg>
                <span className="relative">{s}</span>
              </button>
            );
          })}
        </div>
      </div>
      <div className="mb-[2px] flex w-[6px] shrink-0 border border-t-0 border-[#696969] bg-[#f0f0f0]">
        <div className="w-[2px] bg-white" />
      </div>
      <div className="flex min-w-0 flex-[521_1_0] items-center">
        <button type="button" aria-label="Scroll left" className="flex h-4 w-4 shrink-0 items-center justify-center">
          <Chevron dir="left" />
        </button>
        <div className="flex h-[15px] min-w-0 flex-1">
          <div className="basis-[48%] bg-[#cdcdcd]" />
        </div>
        <button type="button" aria-label="Scroll right" className="flex h-4 w-4 shrink-0 items-center justify-center">
          <Chevron dir="right" />
        </button>
      </div>
      <div className="w-[3px] shrink-0 bg-black" />
      <div className="w-[17px] shrink-0 border-r border-[#dcdcdc]" />
    </div>
  );
}

function StatusBar() {
  return (
    <div className="flex h-[22px] shrink-0 items-center border-t border-white bg-[#f0f0f0] pt-[2px] text-[12px]">
      <div className="h-4 w-[333px] shrink-0 pl-[10px] leading-4">Sheet 2 / 3</div>
      <div className="h-4 w-[357px] shrink-0 border-l border-[#a0a0a0] pl-[5px] leading-4">PageStyle_Sheet2</div>
      <div className="h-4 w-[54px] shrink-0 border-l border-[#a0a0a0]" />
      <div className="h-4 w-[34px] shrink-0 border-l border-[#a0a0a0] pl-1 leading-4">STD</div>
      <div className="h-4 w-[17px] shrink-0 border-l border-[#a0a0a0] pl-[3px] leading-4">*</div>
      <div className="h-4 w-[28px] shrink-0 border-l border-[#a0a0a0]" />
      <div className="h-4 min-w-0 flex-1 border-l border-[#a0a0a0] pr-1 text-center leading-4">Sum=0</div>
      <div className="flex h-4 w-[153px] shrink-0 items-center gap-1 border-l border-[#a0a0a0] pl-1">
        <ZoomButton label="Zoom out" d="M3.500 6h5" />
        <div className="relative flex h-4 min-w-0 flex-1 items-center">
          <div className="absolute inset-x-0 top-[7px] h-0.5 border-t border-[#808080] bg-white" />
          <div className="absolute top-[3px] left-1/2 h-[10px] w-px bg-[#808080]" />
          <input
            type="range"
            aria-label="Zoom"
            min={0}
            max={100}
            defaultValue={34}
            className="relative h-4 w-full appearance-none bg-transparent [&::-webkit-slider-thumb]:h-[9px] [&::-webkit-slider-thumb]:w-[9px] [&::-webkit-slider-thumb]:appearance-none [&::-webkit-slider-thumb]:rounded-full [&::-webkit-slider-thumb]:border [&::-webkit-slider-thumb]:border-[#1d3a4e] [&::-webkit-slider-thumb]:bg-[#5b8fae]"
          />
        </div>
        <ZoomButton label="Zoom in" d="M3.500 6h5M6 3.500v5" />
        <span className="w-[3px]" />
      </div>
      <div className="h-4 w-[37px] shrink-0 border-l border-[#a0a0a0] pl-1 leading-4">78%</div>
    </div>
  );
}

function ZoomButton({ label, d }: { label: string; d: string }) {
  return (
    <button type="button" aria-label={label} className="shrink-0">
      <svg width="12" height="12" viewBox="0 0 12 12" aria-hidden="true" className="block">
        <circle cx="6" cy="6" r="5" fill="#cfe5f5" stroke="#4d5d69" />
        <path d={d} stroke="#1a4d79" strokeWidth="1.500" />
      </svg>
    </button>
  );
}

const pinned = ['windows', 'ie', 'folder', 'kbs', 'winamp', 'itunes', 'book', 'store'];
const tasks = [
  { icon: 'chrome', text: 'Concurs: Câștigă do...', active: false },
  { icon: 'sheet', text: 'Concurs Câștigă dou...', active: true },
  { icon: 'paint', text: 'Untitled - Paint', active: false },
];

function Taskbar() {
  return (
    <footer className="relative flex h-[30px] shrink-0 items-stretch overflow-hidden bg-linear-to-r from-[#2b2e6e] via-[#2d5cb0] via-60% to-[#33438c] text-[12px] text-white">
      <svg className="absolute inset-0 h-full w-full" viewBox="0 0 1368 30" preserveAspectRatio="none" aria-hidden="true">
        <path d="M846 5q20-2 30 5-15 2-30-1zM925 15q15-6 28-1-8 4 3 6-20 2-31-5z" fill="#2340a6" opacity=".7" />
        <ellipse cx="790" cy="8" rx="20" ry="6" fill="#3a3fae" opacity=".6" />
        <path d="M850 3q60-4 140 0-60 4-140 0z" fill="#4d8bd0" opacity=".5" />
        <path d="M1030 28Q1080 10 1170 4 1110 18 1060 30z" fill="#4a86cf" opacity=".25" />
      </svg>
      <div className="relative flex w-[364px] shrink-0">
        {pinned.map((p) => (
          <button key={p} type="button" aria-label={p} className="flex w-[46px] items-center justify-center first:w-10">
            <Icon name={p} />
          </button>
        ))}
      </div>
      <div className="relative flex gap-1 pb-px">
        {tasks.map((t) => (
          <button
            key={t.text}
            type="button"
            className={
              t.active
                ? 'flex w-[158px] items-center gap-[2px] border border-white/80 bg-white/45 pl-[10px] whitespace-nowrap'
                : 'flex w-[158px] items-center gap-1 border border-white/30 bg-white/20 pl-2 whitespace-nowrap'
            }
          >
            <Icon name={t.icon} />
            {t.text}
          </button>
        ))}
      </div>
      <div className="relative ml-auto flex items-center pr-8">
        <svg width="8" height="4" viewBox="0 0 8 4" aria-hidden="true" className="mr-[14px]">
          <path d="M4 0l4 4H0z" fill="#fff" />
        </svg>
        <div className="flex items-center gap-[7px]">
          <span className="mr-1">
            <Icon name="trayFlag" />
          </span>
          <Icon name="trayBattery" size={15} />
          <Icon name="traySignal" />
          <Icon name="trayVolume" size={15} />
        </div>
        <span className="ml-[14px]">ROU</span>
        <time className="ml-7">14:29</time>
      </div>
    </footer>
  );
}

export default function App() {
  return (
    <div className="flex h-screen flex-col overflow-hidden font-['Open_Sans','Noto_Sans',sans-serif] text-[12px] text-black">
      <div className="flex min-h-0 flex-1 flex-col bg-linear-to-b from-[#7fc3d3] to-[#0d5aa5] pr-[2px]">
        <header className="flex h-[23px] shrink-0 items-start border-b border-[#545fc9] bg-[#6670e6]">
          <span className="w-[102px] shrink-0 pt-[3px] pl-[3px]">
            <Icon name="sheet" />
          </span>
          <h1 className="min-w-0 flex-1 truncate text-center text-[14px] leading-[23px] text-[#26264a]">
            Concurs Câștigă două pachete de cărți de la Editura Nemira!.xlsx - OpenOffice Calc
          </h1>
          <div className="flex h-[19px] shrink-0">
            <button type="button" aria-label="Minimize" className="flex w-[26px] items-end justify-center pb-[6px]">
              <span className="h-0.5 w-2 bg-[#222]" />
            </button>
            <button type="button" aria-label="Restore" className="flex w-[27px] items-center justify-center">
              <svg width="11" height="11" viewBox="0 0 11 11" aria-hidden="true">
                <path d="M.5 3.500h7v6h-7zM.5 2.500h7M2 .5h8.500V8" fill="none" stroke="#222" />
              </svg>
            </button>
            <button type="button" aria-label="Close" className="mr-[3px] flex w-[45px] items-center justify-center bg-[#c75050]">
              <svg width="8" height="8" viewBox="0 0 8 8" aria-hidden="true">
                <path d="M.5 1l7 6M7.500 1l-7 6" stroke="#fff" strokeWidth="1.800" />
              </svg>
            </button>
          </div>
        </header>

        <nav className="flex h-6 shrink-0 items-center border-b border-[#e2e3e5] bg-[#f5f6f8] pl-px">
          {menus.map((m) => {
            const k = mnemonic[m] ?? 0;
            return (
              <button key={m} type="button" className="px-[5px] leading-5">
                {m.slice(0, k)}
                <span className="underline underline-offset-2">{m[k]}</span>
                {m.slice(k + 1)}
              </button>
            );
          })}
          <div className="ml-auto flex items-center gap-[21px] pr-[6px]">
            <button type="button" aria-label="Download updates">
              <Icon name="update" />
            </button>
            <button type="button" aria-label="Close document" className="flex w-[12px] justify-center">
              <svg width="9" height="9" viewBox="0 0 9 9" aria-hidden="true">
                <path d="M1 1l7 7M8 1L1 8" stroke="#5d666e" strokeWidth="2" />
              </svg>
            </button>
          </div>
        </nav>

        <div className="flex h-[31px] shrink-0 bg-[#f5f6f8]">
          <div className="flex items-center border-r border-b border-[#c6c8ca]">
            <Grip />
            <Tools
              items={['sheet', 'v', 'open', 'v', 'save', 'mail', '|', '*edit', '|', 'pdf', 'print', 'preview', '|', 'spell', '*autospell', '|', 'cut', 'copy', 'paste', 'v', 'brush', '|', 'undo', 'v', 'redo', 'x', '|', 'globe', 'sortAz', 'sortZa', '|', 'chart', 'draw', '|', 'find', 'navigator', 'gallery', 'db', 'zoom', '|', 'help']}
            />
            <span className="w-[6px]" />
            <Overflow />
            <span className="w-px" />
          </div>
          <div className="flex items-center border-r border-b border-[#c6c8ca]">
            <span className="w-px" />
            <Grip />
            <Combo label="Find" placeholder="Find" className="w-[100px]" />
            <Tools items={['arrowDown', 'arrowUp']} />
            <span className="w-[6px]" />
            <Overflow />
            <span className="w-px" />
          </div>
        </div>

        <div className="flex h-8 shrink-0 border-b border-[#a0a0a0] bg-[#f5f6f8]">
          <div className="flex items-center border-r border-b border-[#c6c8ca]">
            <Grip />
            <Tools items={['styles']} />
            <span className="w-[9px]" />
            <Combo label="Font name" value="Calibri" className="w-[154px]" />
            <span className="w-2" />
            <Combo label="Font size" value="11" className="w-[62px]" />
            <span className="w-2" />
            <Tools
              items={['bold', 'italic', 'underline', '|', 'left', 'center', 'right', 'justify', 'merge', '|', 'coin', 'percent', 'standard', 'addDec', 'delDec', '|', 'outdent', 'indent', '|', 'borders', 'v', 'fill', 'v', 'fontColor', 'v']}
            />
            <span className="w-[5px]" />
            <Overflow />
            <span className="w-px" />
          </div>
        </div>

        <div className="flex min-h-0 flex-1 bg-[#f0f0f0]">
          <main className="flex min-w-0 flex-1 flex-col">
            <div className="flex h-[33px] shrink-0 items-center border-t border-r border-t-white border-r-[#a0a0a0] pr-1 pb-[2px] pl-[6px]">
              <Combo label="Name box" value="F22" className="w-[126px]" />
              <span className="w-[7px]" />
              <Tools items={['fx', 'sigma', 'equals']} />
              <span className="w-[9px]" />
              <input aria-label="Input line" className="h-[23px] min-w-0 flex-1 border border-t-2 border-t-[#696969] border-r-[#e3e3e3] border-b-[#e3e3e3] border-l-[#696969] bg-white px-1 outline-none" />
            </div>
            <div className="flex min-h-0 flex-1 flex-col border-l-2 border-[#8a8a8a]">
              <div className="flex min-h-0 flex-1">
                <Sheet />
                <VerticalScroll />
              </div>
              <SheetTabs />
            </div>
          </main>
          <aside className="flex w-2 shrink-0 flex-col items-center justify-center border-r border-l border-l-white border-r-[#a0a0a0]">
            <svg width="4" height="38" viewBox="0 0 4 38" aria-hidden="true">
              <path d="M3 0v5L0 2.500zM3 32v5l-3-2.500z" fill="#555" />
              <path d="M1 8h2v2H1zM1 12h2v2H1zM1 16h2v2H1zM1 20h2v2H1zM1 24h2v2H1z" fill="#888" />
            </svg>
          </aside>
        </div>
        <StatusBar />
      </div>
      <Taskbar />
    </div>
  );
}
